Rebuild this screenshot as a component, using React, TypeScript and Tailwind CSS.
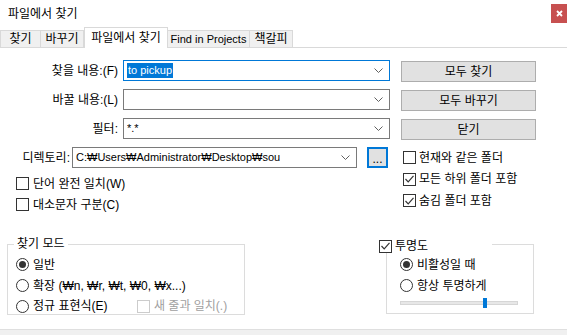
import React from "react";

const font = {
  fontFamily: '"Liberation Sans", "Noto Sans CJK KR", sans-serif',
};

const Chevron: React.FC = () => (
  <svg width="9" height="5" viewBox="0 0 9 5" className="shrink-0">
    <polyline points="0.5,0.5 4.5,4.5 8.5,0.5" fill="none" stroke="#606060" strokeWidth="1" />
  </svg>
);

const Combo: React.FC<{ w: string; focused?: boolean; children?: React.ReactNode }> = ({
  w,
  focused,
  children,
}) => (
  <div
    className={`${w} h-[21px] flex items-center justify-between pl-[3px] pr-[6px] bg-white border ${
      focused ? "border-[#0078d7]" : "border-[#7a7a7a]"
    }`}
  >
    <div className="flex items-center text-[11px] leading-[15px] whitespace-nowrap overflow-hidden">{children}</div>
    <Chevron />
  </div>
);

const Check: React.FC<{ checked?: boolean; disabled?: boolean }> = ({ checked, disabled }) => (
  <div
    className={`w-[13px] h-[13px] shrink-0 border bg-white flex items-center justify-center ${
      disabled ? "border-[#cccccc]" : "border-[#333333]"
    }`}
  >
    {checked && (
      <svg width="9" height="8" viewBox="0 0 9 8">
        <polyline points="0.5,4 3.2,6.8 8.5,0.8" fill="none" stroke="#333" strokeWidth="1.2" />
      </svg>
    )}
  </div>
);

const Radio: React.FC<{ checked?: boolean }> = ({ checked }) => (
  <div className="w-[13px] h-[13px] shrink-0 rounded-full border border-[#333333] bg-white flex items-center justify-center">
    {checked && <div className="w-[7px] h-[7px] rounded-full bg-[#333333]" />}
  </div>
);

const Btn: React.FC<{ children: React.ReactNode }> = ({ children }) => (
  <div className="w-[135px] h-[21px] bg-[#e1e1e1] border border-[#adadad] flex items-center justify-center leading-none">
    {children}
  </div>
);

const tabs = [
  { label: "찾기", w: "w-[41px]" },
  { label: "바꾸기", w: "w-[44px]" },
  { label: "파일에서 찾기", w: "w-[84px]", active: true },
  { label: "Find in Projects", w: "w-[83px] text-[11px]" },
  { label: "책갈피", w: "w-[44px]" },
];

export default function App() {
  return (
    <div
      className="w-[567px] h-[335px] bg-white text-black text-[12px] flex flex-col overflow-hidden"
      style={font}
    >
      {/* Title bar */}
      <div className="h-[27px] flex items-start justify-between">
        <div className="pl-[8px] pt-[6px] leading-[16px]">파일에서 찾기</div>
        <div className="mt-[4px] w-[16px] h-[19px] bg-[#c75050] flex items-center justify-center">
          <svg width="7" height="7" viewBox="0 0 7 7">
            <path d="M1 1 L6 6 M6 1 L1 6" stroke="white" strokeWidth="1.8" />
          </svg>
        </div>
      </div>

      {/* Tabs */}
      <div className="h-[21px] flex items-end border-b border-[#d9d9d9]">
        {tabs.map((t) =>
          t.active ? (
            <div
              key={t.label}
              className={`${t.w} h-[21px] -mb-px bg-white border border-b-0 border-[#d9d9d9] flex items-center justify-center leading-none`}
            >
              {t.label}
            </div>
          ) : (
            <div
              key={t.label}
              className={`${t.w} h-[17px] bg-[#f0f0f0] border border-b-0 border-[#d9d9d9] -ml-px first:ml-0 flex items-center justify-center leading-none whitespace-nowrap`}
            >
              {t.label}
            </div>
          )
        )}
      </div>

      {/* Main area */}
      <div className="flex pt-[12px]">
        {/* Left */}
        <div className="w-[390px] flex flex-col">
          <div className="flex items-center h-[21px]">
            <div className="w-[118px] text-right">찾을 내용:(F)</div>
            <div className="ml-[5px]">
              <Combo w="w-[267px]" focused>
                <span className="bg-[#0078d7] text-white px-px">to pickup</span>
              </Combo>
            </div>
          </div>
          <div className="flex items-center h-[21px] mt-[8px]">
            <div className="w-[118px] text-right">바꿀 내용:(L)</div>
            <div className="ml-[5px]">
              <Combo w="w-[267px]" />
            </div>
          </div>
          <div className="flex items-center h-[21px] mt-[8px]">
            <div className="w-[118px] text-right">필터:</div>
            <div className="ml-[5px]">
              <Combo w="w-[267px]">*.*</Combo>
            </div>
          </div>
          <div className="flex items-center h-[21px] mt-[8px]">
            <div className="w-[70px] text-right">디렉토리:</div>
            <div className="ml-[2px]">
              <Combo w="w-[285px]">C:₩Users₩Administrator₩Desktop₩sou</Combo>
            </div>
            <div className="ml-[10px] w-[21px] h-[21px] border-2 border-[#0078d7] bg-[#e1e1e1] flex items-end justify-center leading-[12px] pb-[1px]">
              ...
            </div>
          </div>
          <div className="flex flex-col pl-[16px] mt-[5px]">
            <div className="flex items-center h-[21px] gap-[4px]">
              <Check />
              <span>단어 완전 일치(W)</span>
            </div>
            <div className="flex items-center h-[21px] gap-[4px]">
              <Check />
              <span>대소문자 구분(C)</span>
            </div>
          </div>
        </div>

        {/* Right */}
        <div className="ml-[11px] pt-[1px] flex flex-col">
          <Btn>모두 찾기</Btn>
          <div className="mt-[8px]">
            <Btn>모두 바꾸기</Btn>
          </div>
          <div className="mt-[8px]">
            <Btn>닫기</Btn>
          </div>
          <div className="flex flex-col pl-[2px] mt-[7px]">
            <div className="flex items-center h-[21px] gap-[3px]">
              <Check />
              <span>현재와 같은 폴더</span>
            </div>
            <div className="flex items-center h-[22px] gap-[3px]">
              <Check checked />
              <span>모든 하위 폴더 포함</span>
            </div>
            <div className="flex items-center h-[21px] gap-[3px]">
              <Check checked />
              <span>숨김 폴더 포함</span>
            </div>
          </div>
        </div>
      </div>

      {/* Bottom groups */}
      <div className="flex mt-[29px] pl-[7px]">
        <div className="relative w-[238px] h-[71px] border border-[#dcdcdc] pl-[8px] pt-[9px]">
          <div className="absolute -top-[9px] left-[6px] bg-white px-[3px] leading-[16px]">찾기 모드</div>
          <div className="flex items-center h-[21px] gap-[4px]">
            <Radio checked />
            <span>일반</span>
          </div>
          <div className="flex items-center h-[21px] gap-[4px]">
            <Radio />
            <span>확장 (₩n, ₩r, ₩t, ₩0, ₩x...)</span>
          </div>
          <div className="flex items-center h-[20px] gap-[4px]">
            <Radio />
            <span className="w-[100px]">정규 표현식(E)</span>
            <Check disabled />
            <span className="text-[#a0a0a0]">새 줄과 일치(.)</span>
          </div>
        </div>

        <div className="relative ml-[141px] w-[148px] h-[70px] border border-[#dcdcdc] pl-[13px] pt-[9px]">
          <div className="absolute -top-[6px] -left-[8px] w-[113px] h-[14px] bg-white flex items-center gap-[3px]">
            <Check checked />
            <span className="leading-[14px]">투명도</span>
          </div>
          <div className="flex items-center h-[21px] gap-[4px]">
            <Radio checked />
            <span>비활성일 때</span>
          </div>
          <div className="flex items-center h-[21px] gap-[4px]">
            <Radio />
            <span>항상 투명하게</span>
          </div>
          <div className="relative mt-[5px] w-[118px] h-[4px] bg-[#e7e7e7] border border-[#d6d6d6]">
            <div className="absolute left-[82px] -top-[4px] w-[4px] h-[10px] bg-[#0078d7]" />
          </div>
        </div>
      </div>

      {/* Bottom strip */}
      <div className="mt-auto h-[6px] bg-[#f0f0f0] border-t border-[#dfdfdf]" />
    </div>
  );
}
